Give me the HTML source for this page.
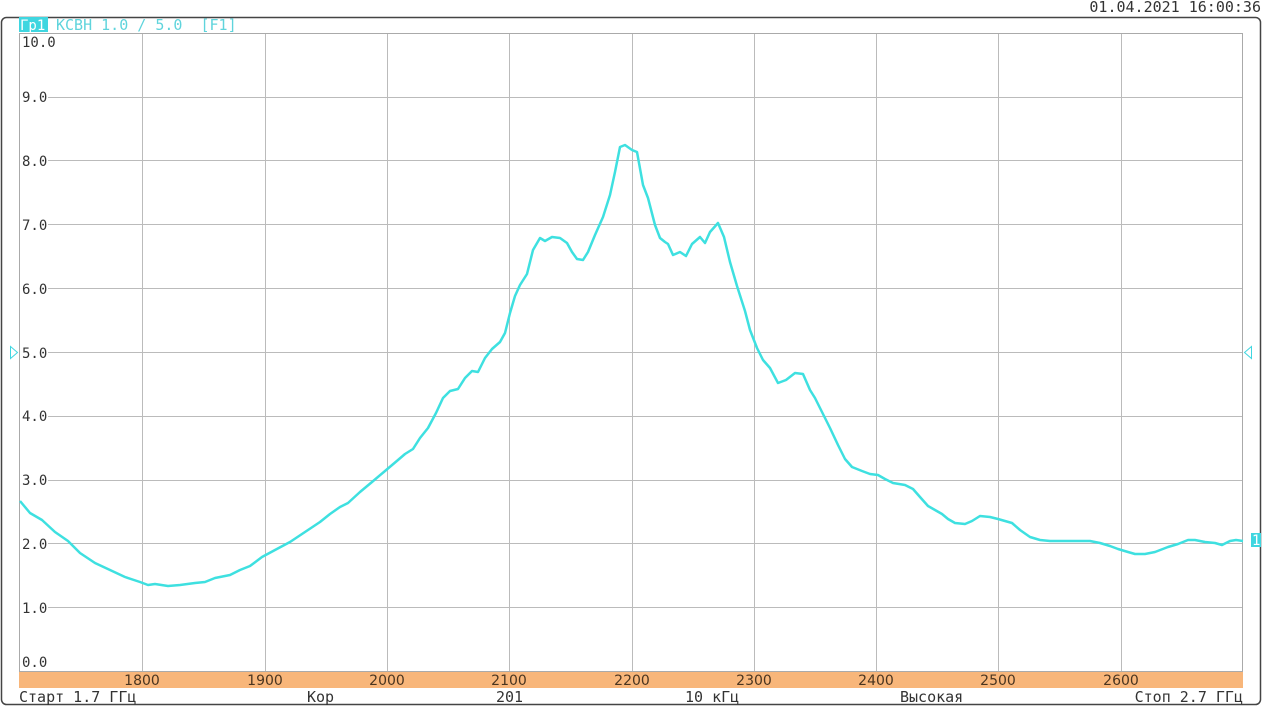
<!DOCTYPE html>
<html><head><meta charset="utf-8"><style>
html,body{margin:0;padding:0;background:#fff;width:1262px;height:706px;overflow:hidden}
svg{display:block}
.m{font-family:"DejaVu Sans Mono","Liberation Mono",monospace;font-size:15px}
.y{font-family:"DejaVu Sans Mono","Liberation Mono",monospace;font-size:14px}
.s{font-family:"DejaVu Sans","Liberation Sans",sans-serif;font-size:14px}
</style></head><body>
<svg width="1262" height="706" viewBox="0 0 1262 706" xmlns="http://www.w3.org/2000/svg">
<rect x="1.5" y="17.5" width="1259" height="687" rx="5" fill="#fff" stroke="#444" stroke-width="1.5"/>
<text x="1261" y="12" text-anchor="end" class="m" fill="#333">01.04.2021 16:00:36</text>
<g stroke="#bbb" stroke-width="1">
<line x1="142.5" y1="33" x2="142.5" y2="671"/><line x1="265.5" y1="33" x2="265.5" y2="671"/>
<line x1="387.5" y1="33" x2="387.5" y2="671"/><line x1="509.5" y1="33" x2="509.5" y2="671"/>
<line x1="632.5" y1="33" x2="632.5" y2="671"/><line x1="754.5" y1="33" x2="754.5" y2="671"/>
<line x1="876.5" y1="33" x2="876.5" y2="671"/><line x1="998.5" y1="33" x2="998.5" y2="671"/>
<line x1="1121.5" y1="33" x2="1121.5" y2="671"/>
<line x1="48" y1="97.5" x2="1243" y2="97.5"/><line x1="48" y1="160.5" x2="1243" y2="160.5"/>
<line x1="48" y1="224.5" x2="1243" y2="224.5"/><line x1="48" y1="288.5" x2="1243" y2="288.5"/>
<line x1="48" y1="352.5" x2="1243" y2="352.5"/><line x1="48" y1="416.5" x2="1243" y2="416.5"/>
<line x1="48" y1="480.5" x2="1243" y2="480.5"/><line x1="48" y1="543.5" x2="1243" y2="543.5"/>
<line x1="48" y1="607.5" x2="1243" y2="607.5"/>
<line x1="48" y1="33.5" x2="1243" y2="33.5"/>
</g>
<rect x="19.5" y="33.5" width="1223" height="638" fill="none" stroke="#aaa"/>
<rect x="19" y="672" width="1224" height="16" fill="#f8b67a"/>
<rect x="19" y="17" width="29" height="15" fill="#3fd6e0"/>
<text x="20" y="30" class="y" fill="#fff">Гр1</text>
<text x="56" y="30" class="m" fill="#5fd4dc" xml:space="preserve">КСВН 1.0 / 5.0  [F1]</text>
<g class="y" fill="#333">
<text x="22" y="47">10.0</text><text x="22" y="102">9.0</text><text x="22" y="166">8.0</text>
<text x="22" y="230">7.0</text><text x="22" y="294">6.0</text><text x="22" y="358">5.0</text>
<text x="22" y="421">4.0</text><text x="22" y="485">3.0</text><text x="22" y="549">2.0</text>
<text x="22" y="613">1.0</text><text x="22" y="667">0.0</text>
</g>
<g class="s" fill="#4a3520" text-anchor="middle">
<text x="142" y="685">1800</text><text x="265" y="685">1900</text><text x="387" y="685">2000</text>
<text x="509" y="685">2100</text><text x="632" y="685">2200</text><text x="754" y="685">2300</text>
<text x="876" y="685">2400</text><text x="998" y="685">2500</text><text x="1121" y="685">2600</text>
</g>
<g class="m" fill="#333">
<text x="19" y="702">Старт 1.7 ГГц</text>
<text x="307" y="702">Кор</text>
<text x="496" y="702">201</text>
<text x="685" y="702">10 кГц</text>
<text x="900" y="702">Высокая</text>
<text x="1243" y="702" text-anchor="end">Стоп 2.7 ГГц</text>
</g>
<polygon points="10.5,346.5 17.5,352.5 10.5,358.5" fill="none" stroke="#3fd6e0"/>
<polygon points="1251.5,346.5 1244.5,352.5 1251.5,358.5" fill="none" stroke="#3fd6e0"/>
<rect x="1251" y="533" width="10" height="14" fill="#3fd6e0"/>
<text x="1252" y="545" class="y" font-size="12" fill="#fff">1</text>
<polyline fill="none" stroke="#3ee0e0" stroke-width="2.5" stroke-linejoin="round" points="20,501 30,513 42,520 55,532 68,541 80,553 95,563 110,570 125,577 140,582 148,585 155,584 168,586 180,585 195,583 205,582 215,578 230,575 240,570 250,566 262,557 275,550 290,542 305,532 320,522 330,514 340,507 348,503 360,492 372,482 385,471 398,460 405,454 413,449 420,438 428,428 436,413 443,398 450,391 458,389 465,378 472,371 478,372 485,358 492,349 500,342 505,333 510,313 515,296 520,285 527,274 533,250 540,238 545,241 552,237 560,238 567,243 572,252 577,259 583,260 588,252 595,235 603,217 610,195 615,172 620,147 625,145 632,150 637,152 643,185 648,198 655,225 660,238 665,242 668,244 673,255 680,252 686,256 692,244 700,237 705,243 710,232 718,223 724,237 730,262 737,286 745,311 750,330 757,348 763,360 770,368 778,383 786,380 795,373 803,374 810,390 815,398 822,412 830,428 838,445 845,459 852,467 862,471 870,474 878,475 885,479 893,483 905,485 913,489 920,497 928,506 935,510 942,514 948,519 955,523 965,524 972,521 980,516 990,517 998,519 1012,523 1020,530 1030,537 1040,540 1050,541 1060,541 1070,541 1080,541 1090,541 1100,543 1110,546 1118,549 1128,552 1135,554 1145,554 1155,552 1168,547 1178,544 1188,540 1195,540 1205,542 1215,543 1222,545 1230,541 1236,540 1243,541"/>
</svg>
</body></html>
